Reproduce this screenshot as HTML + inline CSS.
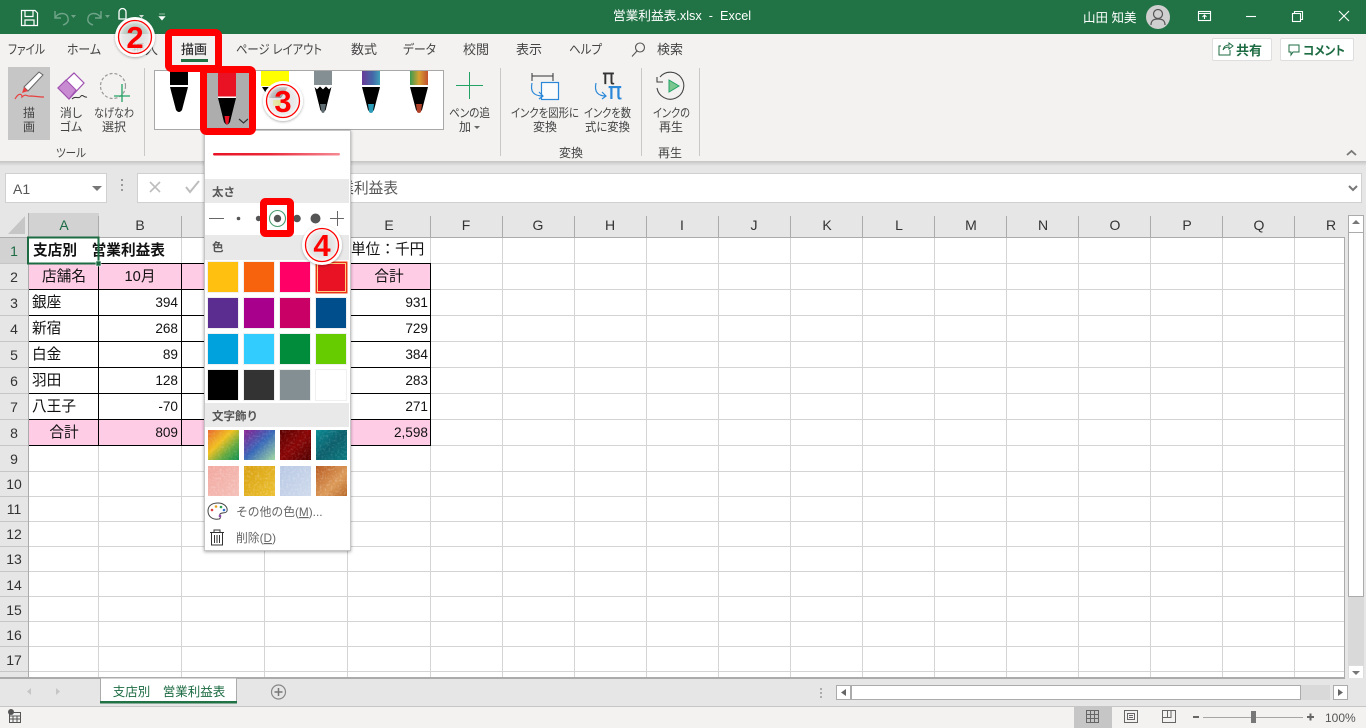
<!DOCTYPE html>
<html lang="ja"><head><meta charset="utf-8"><title>営業利益表.xlsx - Excel</title>
<style>
html,body{margin:0;padding:0;width:1366px;height:728px;overflow:hidden;background:#fff}
svg{display:block;font-family:"Liberation Sans","Noto Sans CJK JP",sans-serif}
.r{font-size:12px;fill:#444;text-anchor:middle;font-feature-settings:"palt"}
.t{font-size:13px;fill:#444;text-anchor:middle;font-feature-settings:"palt"}
.h{font-size:14px;fill:#333;text-anchor:middle}
.c{font-size:14.67px;fill:#111}
.m{text-anchor:middle}.e{text-anchor:end}
.n{font-size:13.6px;fill:#111;text-anchor:end}
.s{font-size:11.5px;font-weight:700;fill:#555}
.cn{font-size:31px;font-weight:700;fill:#f00;text-anchor:middle}
</style></head><body>
<svg width="1366" height="728" viewBox="0 0 1366 728" xmlns="http://www.w3.org/2000/svg">
<defs>
<linearGradient id="sh" x1="0" y1="0" x2="0" y2="1"><stop offset="0" stop-color="#c4c4c4"/><stop offset="1" stop-color="#e6e6e6"/></linearGradient>
<linearGradient id="ln" x1="0" x2="1"><stop offset="0" stop-color="#e81224"/><stop offset=".45" stop-color="#ea2a3a"/><stop offset="1" stop-color="#f58b95"/></linearGradient>
<linearGradient id="g1b" x1="0" y1="0" x2="1" y2="1"><stop offset="0" stop-color="#e86a30"/><stop offset=".4" stop-color="#f0c020"/><stop offset=".7" stop-color="#60a840"/><stop offset="1" stop-color="#109050"/></linearGradient>
<linearGradient id="g2" x1="0" y1="0" x2="1" y2="1"><stop offset="0" stop-color="#8a1f90"/><stop offset=".5" stop-color="#3868b8"/><stop offset="1" stop-color="#a0d8a0"/></linearGradient>
<linearGradient id="g3" x1="0" y1="0" x2="1" y2="1"><stop offset="0" stop-color="#5a0000"/><stop offset=".5" stop-color="#8a0606"/><stop offset="1" stop-color="#500000"/></linearGradient>
<linearGradient id="g4" x1="0" y1="0" x2="1" y2="1"><stop offset="0" stop-color="#0a8a92"/><stop offset=".5" stop-color="#0c5f6c"/><stop offset="1" stop-color="#0a7a80"/></linearGradient>
<linearGradient id="g5" x1="0" y1="0" x2="1" y2="1"><stop offset="0" stop-color="#f2a8a0"/><stop offset="1" stop-color="#f4c0b8"/></linearGradient>
<linearGradient id="g6" x1="0" y1="0" x2="1" y2="1"><stop offset="0" stop-color="#d8a010"/><stop offset="1" stop-color="#ecc030"/></linearGradient>
<linearGradient id="g7" x1="0" y1="0" x2="1" y2="1"><stop offset="0" stop-color="#b8c8e4"/><stop offset="1" stop-color="#cfdaec"/></linearGradient>
<linearGradient id="g8" x1="0" y1="0" x2="1" y2="1"><stop offset="0" stop-color="#b85a20"/><stop offset=".6" stop-color="#dc9a58"/><stop offset="1" stop-color="#b86828"/></linearGradient>
<linearGradient id="p5" x1="0" x2="1"><stop offset="0" stop-color="#6a3a98"/><stop offset=".6" stop-color="#4468a8"/><stop offset="1" stop-color="#40a0b8"/></linearGradient>
<linearGradient id="p6" x1="0" x2="1"><stop offset="0" stop-color="#3a9a50"/><stop offset=".5" stop-color="#d8a030"/><stop offset="1" stop-color="#c05030"/></linearGradient>
<filter id="nz" x="0" y="0" width="1" height="1"><feTurbulence type="fractalNoise" baseFrequency=".45" numOctaves="2" seed="4"/><feColorMatrix values="0 0 0 0 1 0 0 0 0 1 0 0 0 0 1 2.2 0 0 0 -1"/><feComposite in2="SourceAlpha" operator="in"/></filter>
<filter id="ms" x="-10%" y="-5%" width="120%" height="110%"><feDropShadow dx="0" dy="1" stdDeviation="1.5" flood-color="#000" flood-opacity=".35"/></filter>
<filter id="cs" x="-20%" y="-20%" width="140%" height="140%"><feDropShadow dx="0" dy="1" stdDeviation="1.2" flood-color="#000" flood-opacity=".3"/></filter>
<radialGradient id="cg"><stop offset="0" stop-color="#ddd" stop-opacity=".55"/><stop offset=".65" stop-color="#eee" stop-opacity=".8"/><stop offset=".85" stop-color="#fff"/></radialGradient>
</defs>

<!-- base -->
<rect width="1366" height="728" fill="#e6e6e6"/>

<!-- grid -->
<rect x="29" y="238" width="1316" height="440" fill="#fff"/>
<path fill="none" stroke="#d4d4d4" stroke-width="1" d="M29 263.500H1345M29 289.500H1345M29 315.500H1345M29 341.500H1345M29 367.500H1345M29 393.500H1345M29 419.500H1345M29 445.500H1345M29 471.500H1345M29 496.500H1345M29 521.500H1345M29 546.500H1345M29 571.500H1345M29 596.500H1345M29 621.500H1345M29 646.500H1345M29 671.500H1345M98.500 238V678M181.500 238V678M264.500 238V678M347.500 238V678M430.500 238V678M502.500 238V678M574.500 238V678M646.500 238V678M718.500 238V678M790.500 238V678M862.500 238V678M934.500 238V678M1006.500 238V678M1078.500 238V678M1150.500 238V678M1222.500 238V678M1294.500 238V678"/>

<!-- pink rows -->
<rect x="29" y="264" width="402" height="25" fill="#ffcce6"/>
<rect x="29" y="420" width="402" height="25" fill="#ffcce6"/>
<path fill="none" stroke="#000" stroke-width="1" d="M29 263.500H431M29 289.500H431M29 315.500H431M29 341.500H431M29 367.500H431M29 393.500H431M29 419.500H431M29 445.500H431M98.500 264V446M181.500 264V446M264.500 264V446M347.500 264V446M430.500 264V446"/>

<!-- headers -->
<rect x="0" y="213" width="1345" height="25" fill="#e6e6e6"/>
<rect x="29" y="213" width="70" height="24" fill="#d2d2d2"/>
<rect x="0" y="238" width="28" height="26" fill="#d2d2d2"/>
<path d="M25 216V234H8Z" fill="#c6c6c6"/>
<path fill="none" stroke="#ababab" d="M98.500 216V237M181.500 216V237M264.500 216V237M347.500 216V237M430.500 216V237M502.500 216V237M574.500 216V237M646.500 216V237M718.500 216V237M790.500 216V237M862.500 216V237M934.500 216V237M1006.500 216V237M1078.500 216V237M1150.500 216V237M1222.500 216V237M1294.500 216V237"/>
<path fill="none" stroke="#ababab" d="M28.500 213V678M0 237.500H1345M1344.500 237V678M0 677.500H1345"/>
<path fill="none" stroke="#c6c6c6" d="M0 263.500H28M0 289.500H28M0 315.500H28M0 341.500H28M0 367.500H28M0 393.500H28M0 419.500H28M0 445.500H28M0 471.500H28M0 496.500H28M0 521.500H28M0 546.500H28M0 571.500H28M0 596.500H28M0 621.500H28M0 646.500H28M0 671.500H28"/>
<g class="h">
<text class="h" x="64" y="230" style="fill:#1c6b42">A</text><text class="h" x="140" y="230">B</text><text class="h" x="223" y="230">C</text><text class="h" x="306" y="230">D</text><text class="h" x="389" y="230">E</text><text class="h" x="466" y="230">F</text><text class="h" x="538" y="230">G</text><text class="h" x="610" y="230">H</text><text class="h" x="682" y="230">I</text><text class="h" x="754" y="230">J</text><text class="h" x="827" y="230">K</text><text class="h" x="899" y="230">L</text><text class="h" x="971" y="230">M</text><text class="h" x="1043" y="230">N</text><text class="h" x="1115" y="230">O</text><text class="h" x="1187" y="230">P</text><text class="h" x="1259" y="230">Q</text><text class="h" x="1331" y="230">R</text>
<text class="h" x="14" y="256" style="fill:#1c6b42">1</text><text class="h" x="14" y="282">2</text><text class="h" x="14" y="308">3</text><text class="h" x="14" y="334">4</text><text class="h" x="14" y="360">5</text><text class="h" x="14" y="386">6</text><text class="h" x="14" y="412">7</text><text class="h" x="14" y="438">8</text><text class="h" x="14" y="464">9</text><text class="h" x="14" y="489">10</text><text class="h" x="14" y="514">11</text><text class="h" x="14" y="539">12</text><text class="h" x="14" y="564">13</text><text class="h" x="14" y="590">14</text><text class="h" x="14" y="615">15</text><text class="h" x="14" y="640">16</text><text class="h" x="14" y="665">17</text>
</g>

<!-- cell text -->
<text class="c" x="33" y="255" font-weight="700">支店別　営業利益表</text>
<text class="c" x="351" y="254">単位：千円</text>
<text class="c m" x="64" y="281">店舗名</text><text class="c m" x="140" y="281">10月</text><text class="c m" x="389" y="281">合計</text>
<text class="c" x="32" y="307">銀座</text><text class="n" x="178" y="307">394</text><text class="n" x="428" y="307">931</text>
<text class="c" x="32" y="333">新宿</text><text class="n" x="178" y="333">268</text><text class="n" x="428" y="333">729</text>
<text class="c" x="32" y="359">白金</text><text class="n" x="178" y="359">89</text><text class="n" x="428" y="359">384</text>
<text class="c" x="32" y="385">羽田</text><text class="n" x="178" y="385">128</text><text class="n" x="428" y="385">283</text>
<text class="c" x="32" y="411">八王子</text><text class="n" x="178" y="411">-70</text><text class="n" x="428" y="411">271</text>
<text class="c m" x="64" y="437">合計</text><text class="n" x="178" y="437">809</text><text class="n" x="428" y="437">2,598</text>
<rect x="28" y="237.500" width="70.500" height="26" fill="none" stroke="#1c6b42" stroke-width="2"/>
<rect x="96" y="261" width="5" height="5" fill="#1c6b42" stroke="#fff" stroke-width=".6"/>

<!-- formula bar -->
<rect x="0" y="162" width="1366" height="51" fill="#e6e6e6"/>
<rect x="5.500" y="173.500" width="101" height="29" fill="#fff" stroke="#d0d0d0"/>
<text x="13" y="194" style="font-size:14px;fill:#555">A1</text>
<path d="M92 186H102L97 191Z" fill="#777"/>
<path d="M122 179v2M122 184v2M122 189v2" stroke="#999" stroke-width="2"/>
<rect x="137.500" y="173.500" width="1224" height="29" fill="#fff" stroke="#d0d0d0"/>
<path d="M150 182L160 192M160 182L150 192" stroke="#bdbdbd" stroke-width="1.600" fill="none"/>
<path d="M186 187L190 192L199 181" stroke="#bdbdbd" stroke-width="2" fill="none"/>
<text x="398" y="193" text-anchor="end" style="font-size:14.670px;fill:#555">支店別　営業利益表</text>
<path d="M1349 186L1353 190L1357 186" stroke="#777" stroke-width="2" fill="none"/>

<!-- title bar -->
<rect width="1366" height="34" fill="#217346"/>
<g fill="none" stroke="#fff" stroke-width="1.200">
<path d="M21.500 10.500H35L37.500 13V25.500H21.500Z"/><path d="M25 10.500V16.500H33V10.500M25 25.500V20H34V25.500"/>
</g>
<g fill="none" stroke="#6fa488" stroke-width="1.400"><path d="M55 11V18H61M55 18C58 12 67 12 68 18C69 22 66 24 63 25"/><path d="M101 11V18H95M101 18C98 12 89 12 88 18C87 22 90 24 93 25"/></g>
<path d="M71 15H76L73.500 18ZM105 15H110L107.500 18Z" fill="#6fa488"/>
<path d="M119 19V12a3.500 3.500 0 0 1 7 0V19Z" fill="none" stroke="#fff" stroke-width="1.300"/>
<path d="M139 15H144L141.500 18Z" fill="#cfe0d6"/>
<path d="M159 14H165M159 16.500H165L162 20Z" fill="#fff" stroke="#fff" stroke-width=".6"/>
<text x="682" y="20" text-anchor="middle" style="font-size:12.700px;fill:#fff">営業利益表.xlsx&#160; -&#160; Excel</text>
<text x="1083" y="22" style="font-size:12.500px;fill:#fff">山田 知美</text>
<circle cx="1158" cy="17" r="12" fill="#cfcfcf"/>
<circle cx="1158" cy="14" r="4.500" fill="none" stroke="#555" stroke-width="1.200"/>
<path d="M1151 25C1151 20 1154 19 1158 19S1165 20 1165 25" fill="none" stroke="#555" stroke-width="1.200"/>
<g fill="none" stroke="#fff" stroke-width="1.100">
<rect x="1198.500" y="11.500" width="12" height="9"/><path d="M1198.500 13.500H1210.500M1204.500 19V15.500M1202.500 17L1204.500 15L1206.500 17"/>
<path d="M1246 16.500H1256"/>
<rect x="1292.500" y="13.500" width="8" height="8"/><path d="M1294.500 13.500V11.500H1302.500V19.500H1300.500"/>
<path d="M1339 11L1349 21M1349 11L1339 21"/>
</g>

<!-- ribbon -->
<rect y="34" width="1366" height="127" fill="#f3f2f1"/>
<rect y="161" width="1366" height="5" fill="url(#sh)"/>
<text class="t" x="26.500" y="54" textLength="37" lengthAdjust="spacingAndGlyphs">ファイル</text><text class="t" x="84" y="54" textLength="34" lengthAdjust="spacingAndGlyphs">ホーム</text><text class="t" x="145" y="54">挿入</text><text class="t" x="194" y="54" style="fill:#333;font-weight:500">描画</text><text class="t" x="279" y="54" textLength="86" lengthAdjust="spacingAndGlyphs">ページ レイアウト</text><text class="t" x="364" y="54">数式</text><text class="t" x="419.500" y="54" textLength="33" lengthAdjust="spacingAndGlyphs">データ</text><text class="t" x="476" y="54">校閲</text><text class="t" x="529" y="54">表示</text><text class="t" x="585.500" y="54" textLength="33" lengthAdjust="spacingAndGlyphs">ヘルプ</text><text class="t" x="670" y="54">検索</text>
<rect x="181" y="59" width="27" height="3" fill="#217346"/>
<g fill="none" stroke="#555" stroke-width="1.100"><circle cx="640" cy="47.500" r="4.500"/><path d="M637 51L632 56.500"/></g>

<rect x="1212.500" y="38.500" width="59" height="22" rx="1.500" fill="#fff" stroke="#dedede"/>
<rect x="1280.500" y="38.500" width="73" height="22" rx="1.500" fill="#fff" stroke="#dedede"/>
<path d="M1221 46H1219V55H1230V50M1223 50C1224 46 1226 45 1229 45V43L1233 46L1229 49V47C1226 47 1224 48 1223 50Z" fill="none" stroke="#1c6b42" stroke-width="1"/>
<text x="1236" y="55" style="font-size:13px;font-weight:700;fill:#1c6b42">共有</text>
<path d="M1289 45H1299V52H1293L1291 55V52H1289Z" fill="none" stroke="#1c6b42" stroke-width="1"/>
<text x="1303" y="55" textLength="42" lengthAdjust="spacingAndGlyphs" style="font-size:12.500px;font-weight:700;fill:#1c6b42;font-feature-settings:'palt'">コメント</text>

<!-- tool group -->
<rect x="8" y="67" width="42" height="73" fill="#c6c6c6"/>
<path d="M24 87L39 72L43 75L28 91Z" fill="#fff" stroke="#666" stroke-width="1"/>
<path d="M24 87L28 91L22 93Z" fill="#e84040"/>
<path d="M15 99C19 92 22 94 22 97C26 93 27 97 31 96C34 96 38 97 44 97" fill="none" stroke="#e84040" stroke-width="1.200"/>
<text class="r" x="29" y="117">描</text><text class="r" x="29" y="131">画</text>
<path d="M58 88L74 73L84 83L69 99Z" fill="#fff" stroke="#a050b0" stroke-width="1.200"/>
<path d="M58 88L66 80L76 90L69 99Z" fill="#c88ad0" stroke="#a050b0" stroke-width="1"/>
<path d="M72 99C76 95 78 100 81 96C83 94 84 98 87 97" fill="none" stroke="#333" stroke-width="1"/>
<text class="r" x="71" y="117">消し</text><text class="r" x="71" y="131">ゴム</text>
<circle cx="113" cy="86" r="12.500" fill="none" stroke="#999" stroke-width="1.200" stroke-dasharray="3 2"/>
<path d="M122 84V102M114 96H130" stroke="#21a366" stroke-width="1.300"/>
<text class="r" x="114" y="117" textLength="40" lengthAdjust="spacingAndGlyphs">なげなわ</text><text class="r" x="114" y="131">選択</text>
<text class="r" x="71" y="157" textLength="30" lengthAdjust="spacingAndGlyphs">ツール</text>
<path d="M144.500 68V156M500.500 68V156M641.500 68V156M699.500 68V156" stroke="#c8c8c8"/>

<!-- pen gallery -->
<rect x="154.500" y="70.500" width="289" height="59" fill="#fff" stroke="#a8a8a8"/>
<rect x="207" y="73" width="43" height="55" fill="#adadad"/>
<g>
<rect x="170" y="71" width="18" height="14" fill="#000"/><path d="M170 87H188L182 110Q179 114 176 110Z" fill="#000"/>
<rect x="218" y="72" width="18" height="25" fill="#e81224"/><path d="M218 98H236L230 122Q227 127 224 122Z" fill="#000"/><path d="M224.500 116H229.500L228.500 123Q227 126 225.500 123Z" fill="#e81224"/><rect x="218" y="96.500" width="18" height="1.500" fill="#fff"/>
<rect x="261" y="71" width="28" height="15" fill="#ffff00"/><path d="M262 87H288L281 98H269Z" fill="#000"/><path d="M273 100H281V106H273Z" fill="#ffff00"/>
<rect x="314" y="71" width="18" height="14" fill="#848f94"/><path d="M314 86L317 89L320 86L323 89L326 86L329 89L332 86L326 110Q323 114 320 110Z" fill="#000" stroke="#fff" stroke-width=".6"/><path d="M320 104H326L324.500 112Q323 114 321.500 112Z" fill="#5d6b70"/>
<rect x="362" y="71" width="18" height="14" fill="url(#p5)"/><path d="M362 87H380L374 110Q371 114 368 110Z" fill="#000"/><path d="M368 104H374L373 112Q371 114 369 112Z" fill="#2a9cb8"/>
<rect x="410" y="71" width="18" height="14" fill="url(#p6)"/><path d="M410 87H428L422 110Q419 114 416 110Z" fill="#000"/><path d="M416 104H422L421 112Q419 114 417 112Z" fill="#b04028"/>
</g>
<path d="M239 119L243.500 123L248 119" fill="none" stroke="#333" stroke-width="1.200"/>

<!-- add pen -->
<path d="M469.500 72V99M456 85.500H483" stroke="#21a366" stroke-width="1"/>
<text class="r" x="469.500" y="117" textLength="41" lengthAdjust="spacingAndGlyphs">ペンの追</text><text class="r" x="465" y="131">加</text><path d="M474 126H480L477 129Z" fill="#666"/>

<!-- convert -->
<path d="M532 73V81M553 73V81M532 76H553" stroke="#333" stroke-width="1" fill="none"/>
<rect x="541.500" y="82.500" width="17" height="17" fill="#fbfbfb" stroke="#2b88d8" stroke-width="1.200"/>
<path d="M532 83C530 92 534 96 543 96M539 92L543 96L539 99" fill="none" stroke="#2b88d8" stroke-width="1.200"/>
<text x="608.500" y="84" text-anchor="middle" style="font-size:21px;fill:#333;font-family:'DejaVu Sans',sans-serif">π</text>
<text x="615" y="99" text-anchor="middle" style="font-size:24px;fill:#2b88d8;font-family:'DejaVu Sans',sans-serif">π</text>
<path d="M596 83C594 92 598 96 606 96M602 92L606 96L602 99" fill="none" stroke="#2b88d8" stroke-width="1.200"/>
<text class="r" x="545" y="117" textLength="68" lengthAdjust="spacingAndGlyphs">インクを図形に</text><text class="r" x="545" y="131">変換</text>
<text class="r" x="607.500" y="117" textLength="47" lengthAdjust="spacingAndGlyphs">インクを数</text><text class="r" x="607.500" y="131" textLength="45" lengthAdjust="spacingAndGlyphs">式に変換</text>
<text class="r" x="571" y="157">変換</text>
<path d="M660 78A13.500 13.500 0 1 1 657 89M657 78V83H663" fill="none" stroke="#444" stroke-width="1.100" transform="translate(0 -1)"/>
<path d="M669 80L679 86L669 92Z" fill="#7cc68f" stroke="#21a366"/>
<text class="r" x="671.500" y="117" textLength="37" lengthAdjust="spacingAndGlyphs">インクの</text><text class="r" x="671" y="131">再生</text>
<text class="r" x="670" y="157">再生</text>
<path d="M1347 155L1351.500 151L1356 155" fill="none" stroke="#777" stroke-width="1.800"/>

<!-- vertical scrollbar -->
<rect x="1346" y="213" width="20" height="494" fill="#e6e6e6"/>
<rect x="1348" y="231" width="16" height="434" fill="#d9d9d9"/>
<rect x="1348.500" y="215.500" width="15" height="17" fill="#fff" stroke="#ababab"/>
<path d="M1352 224H1360L1356 220Z" fill="#777"/>
<rect x="1348.500" y="232.500" width="15" height="364" fill="#fff" stroke="#ababab"/>
<rect x="1348.500" y="665.500" width="15" height="13" fill="#fff" stroke="#dcdcdc"/>
<path d="M1352 671H1360L1356 675Z" fill="#777"/>

<!-- sheet tabs -->
<rect y="678" width="1366" height="29" fill="#e6e6e6"/>
<path d="M0 678.500H1345" stroke="#ababab"/>
<path d="M27 691.500L31 688V695ZM56 688L60 691.500L56 695Z" fill="#c6c6c6" stroke="none"/>
<path d="M100.500 678.500V702H236.500V678.500" fill="#fff" stroke="#ababab"/>
<rect x="100" y="701" width="137" height="2.500" fill="#217346"/>
<text x="169" y="696" text-anchor="middle" style="font-size:12.500px;fill:#1c6b42">支店別　営業利益表</text>
<circle cx="278.500" cy="692" r="7" fill="none" stroke="#888" stroke-width="1.200"/>
<path d="M274.500 692H282.500M278.500 688V696" stroke="#777" stroke-width="1.500"/>
<path d="M821 688v2M821 692v2M821 696v2" stroke="#999" stroke-width="1.500"/>
<rect x="836.500" y="685.500" width="14" height="14" fill="#fff" stroke="#ababab"/>
<path d="M846 689V696L841 692.500Z" fill="#666"/>
<rect x="851" y="685" width="479" height="15" fill="#d9d9d9"/>
<rect x="851.500" y="685.500" width="449" height="14" fill="#fff" stroke="#ababab"/>
<rect x="1333.500" y="685.500" width="14" height="14" fill="#fff" stroke="#ababab"/>
<path d="M1338 689V696L1343 692.500Z" fill="#666"/>

<!-- status bar -->
<rect y="706" width="1366" height="22" fill="#f3f2f1"/>
<path d="M0 706.500H1366" stroke="#c6c6c6"/>
<rect x="1074" y="707" width="38" height="21" fill="#c6c6c6"/>
<circle cx="11" cy="712" r="3" fill="#555"/>
<path d="M9.500 712.500H20.500V722.500H9.500ZM9.500 716H20.500M9.500 719H20.500M13 716V722M17 716V722" fill="none" stroke="#555"/>
<path d="M1086.500 710.500H1098.500V722.500H1086.500ZM1086.500 714.500H1098.500M1086.500 718.500H1098.500M1090.500 710.500V722.500M1094.500 710.500V722.500" fill="none" stroke="#666"/>
<path d="M1124.500 710.500H1137.500V722.500H1124.500ZM1127.500 713.500H1134.500V719.500H1127.500ZM1129 715.500H1133M1129 717.500H1133" fill="none" stroke="#666"/>
<path d="M1162.500 710.500H1175.500V722.500H1162.500ZM1162.500 717.500H1167.500V710.500M1167.500 717.500H1171V710.500" fill="none" stroke="#666"/>
<path d="M1193 717H1199" stroke="#666" stroke-width="2"/>
<path d="M1203 717.500H1303" stroke="#a6a6a6"/>
<rect x="1251" y="711" width="5" height="12" fill="#777"/>
<path d="M1307 717H1314M1310.500 713.500V720.500" stroke="#666" stroke-width="2"/>
<text x="1325" y="722" style="font-size:12px;fill:#555">100%</text>

<!-- drop-down menu -->
<rect x="204.500" y="130.500" width="146" height="420" fill="#fff" stroke="#c6c6c6" filter="url(#ms)"/>
<rect x="213" y="153" width="127" height="2.500" rx="1.200" fill="url(#ln)"/>
<rect x="205" y="179" width="144" height="24" fill="#e9e9e9"/>
<text class="s" x="212" y="196">太さ</text>
<path d="M209 218.500H224" stroke="#666" stroke-width="1"/>
<circle cx="238.500" cy="218.500" r="1.800" fill="#555"/>
<circle cx="258.500" cy="218.500" r="2.700" fill="#555"/>
<circle cx="297" cy="218.500" r="3.800" fill="#555"/>
<circle cx="315.500" cy="218.500" r="5" fill="#555"/>
<path d="M330 218.500H344M337.500 211V226" stroke="#666" stroke-width="1"/>
<rect x="205" y="235" width="144" height="25" fill="#e9e9e9"/>
<text class="s" x="212" y="251">色</text>
<g stroke="#f0f0f0" stroke-width="1">
<rect x="207.500" y="261.500" width="31" height="31" fill="#ffc010"/><rect x="243.500" y="261.500" width="31" height="31" fill="#f7630c"/><rect x="279.500" y="261.500" width="31" height="31" fill="#ff0066"/>
<rect x="207.500" y="297.500" width="31" height="31" fill="#5c2d91"/><rect x="243.500" y="297.500" width="31" height="31" fill="#a8008c"/><rect x="279.500" y="297.500" width="31" height="31" fill="#c90066"/><rect x="315.500" y="297.500" width="31" height="31" fill="#004e8c"/>
<rect x="207.500" y="333.500" width="31" height="31" fill="#00a2dd"/><rect x="243.500" y="333.500" width="31" height="31" fill="#33ccff"/><rect x="279.500" y="333.500" width="31" height="31" fill="#008c3a"/><rect x="315.500" y="333.500" width="31" height="31" fill="#66cc00"/>
<rect x="207.500" y="369.500" width="31" height="31" fill="#000"/><rect x="243.500" y="369.500" width="31" height="31" fill="#333"/><rect x="279.500" y="369.500" width="31" height="31" fill="#848f94"/><rect x="315.500" y="369.500" width="31" height="31" fill="#fff"/>
</g>
<rect x="316" y="262" width="31" height="31" fill="#e81224" stroke="#f04a10" stroke-width="1"/>
<rect x="317.500" y="263.500" width="28" height="28" fill="none" stroke="#ffd080" stroke-width="1"/>
<rect x="205" y="403" width="144" height="24" fill="#e9e9e9"/>
<text class="s" x="212" y="420">文字飾り</text>
<rect x="208" y="430" width="31" height="30" fill="url(#g1b)"/>
<rect x="244" y="430" width="31" height="30" fill="url(#g2)"/>
<rect x="280" y="430" width="31" height="30" fill="url(#g3)"/>
<rect x="316" y="430" width="31" height="30" fill="url(#g4)"/>
<rect x="208" y="466" width="31" height="30" fill="url(#g5)"/>
<rect x="244" y="466" width="31" height="30" fill="url(#g6)"/>
<rect x="280" y="466" width="31" height="30" fill="url(#g7)"/>
<rect x="316" y="466" width="31" height="30" fill="url(#g8)"/>
<g filter="url(#nz)" opacity=".18"><rect x="208" y="430" width="139" height="30"/></g>
<g filter="url(#nz)" opacity=".3"><rect x="208" y="466" width="139" height="30"/></g>
<rect x="239" y="430" width="5" height="66" fill="#fff"/><rect x="275" y="430" width="5" height="66" fill="#fff"/><rect x="311" y="430" width="5" height="66" fill="#fff"/>
<path d="M208 511C208 505 213 503 218 503C224 503 228 507 227 511C226 514 222 512 220 514C219 516 222 518 219 519C213 520 208 517 208 511Z" fill="#fff" stroke="#444" stroke-width="1"/>
<circle cx="212" cy="510" r="1.300" fill="#e04040"/><circle cx="216" cy="506.500" r="1.300" fill="#e8a020"/><circle cx="221" cy="507" r="1.300" fill="#30a050"/><circle cx="224" cy="510" r="1.300" fill="#3070d0"/><circle cx="220" cy="516" r="1.300" fill="#9040b0"/>
<text x="236" y="516" style="font-size:11.800px;fill:#666">その他の色(<tspan text-decoration="underline">M</tspan>)...</text>
<path d="M210 532.500H224M214 532V530H220V532M211.500 533V545H222.500V533M214.500 535V543M217 535V543M219.500 535V543" fill="none" stroke="#333" stroke-width="1"/>
<text x="236" y="542" style="font-size:11.800px;fill:#666">削除(<tspan text-decoration="underline">D</tspan>)</text>

<!-- thick-size selection -->
<rect x="263.500" y="201.500" width="27" height="32" rx="2" fill="#fff" stroke="#f00" stroke-width="7"/>
<circle cx="277.500" cy="218.500" r="8" fill="#fff" stroke="#4a9d6f" stroke-width="1.100"/>
<circle cx="277.500" cy="218.500" r="3.700" fill="#555"/>

<!-- red highlight boxes -->
<rect x="168.500" y="32.500" width="50" height="36" rx="3" fill="none" stroke="#f00" stroke-width="7"/>
<rect x="203.500" y="69.500" width="49" height="62" rx="3" fill="none" stroke="#f00" stroke-width="7"/>

<!-- callouts -->
<g filter="url(#cs)"><circle cx="135" cy="37" r="20" fill="url(#cg)"/></g>
<circle cx="135" cy="37" r="16.500" fill="none" stroke="#f00" stroke-width="1.300"/>
<text class="cn" x="135" y="48">2</text>
<g filter="url(#cs)"><circle cx="283" cy="101" r="20" fill="url(#cg)"/></g>
<circle cx="283" cy="101" r="16.500" fill="none" stroke="#f00" stroke-width="1.300"/>
<text class="cn" x="283" y="112">3</text>
<g filter="url(#cs)"><circle cx="322" cy="245" r="20" fill="url(#cg)"/></g>
<circle cx="322" cy="245" r="16.500" fill="none" stroke="#f00" stroke-width="1.300"/>
<text class="cn" x="322" y="256">4</text>
</svg>
</body></html>
